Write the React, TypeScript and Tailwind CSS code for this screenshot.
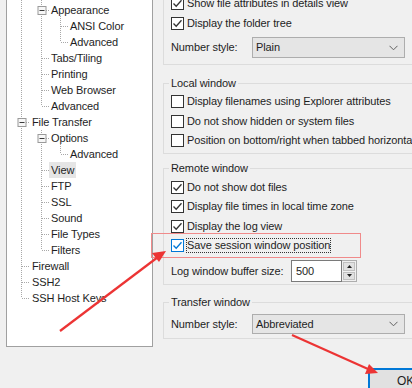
import React from 'react';

interface TreeNode {
  label: string;
  depth: number;
  selected?: boolean;
}

const tree: TreeNode[] = [
  { label: 'Appearance', depth: 1 },
  { label: 'ANSI Color', depth: 2 },
  { label: 'Advanced', depth: 2 },
  { label: 'Tabs/Tiling', depth: 1 },
  { label: 'Printing', depth: 1 },
  { label: 'Web Browser', depth: 1 },
  { label: 'Advanced', depth: 1 },
  { label: 'File Transfer', depth: 0 },
  { label: 'Options', depth: 1 },
  { label: 'Advanced', depth: 2 },
  { label: 'View', depth: 1, selected: true },
  { label: 'FTP', depth: 1 },
  { label: 'SSL', depth: 1 },
  { label: 'Sound', depth: 1 },
  { label: 'File Types', depth: 1 },
  { label: 'Filters', depth: 1 },
  { label: 'Firewall', depth: 0 },
  { label: 'SSH2', depth: 0 },
  { label: 'SSH Host Keys', depth: 0 },
];

const indent = ['pl-[25px]', 'pl-[44px]', 'pl-[63px]'];

// row centre in tree-local coords
const cy = (i: number) => 10 + 16 * i;

function Expander({ x, y }: { x: number; y: number }) {
  return (
    <g>
      <rect x={x - 4 + 0.5} y={y - 4 + 0.5} width={8} height={8} fill="#f7f7f7" stroke="#9a9a9a" />
      <line x1={x - 2} y1={y + 0.5} x2={x + 3} y2={y + 0.5} stroke="#3a3a3a" />
    </g>
  );
}

function TreeLines() {
  const dot = { stroke: '#a8a8a8', strokeDasharray: '1 1', strokeWidth: 1 };
  const h = (x1: number, x2: number, y: number, k: string) => (
    <line key={k} x1={x1} x2={x2} y1={y + 0.5} y2={y + 0.5} {...dot} />
  );
  const v = (x: number, y1: number, y2: number, k: string) => (
    <line key={k} x1={x + 0.5} x2={x + 0.5} y1={y1} y2={y2} {...dot} />
  );
  return (
    <svg className="absolute left-0 top-0" width={146} height={346}>
      {v(14, 0, cy(18), 'v0')}
      {v(34, 0, cy(6), 'v1a')}
      {v(34, cy(7) + 8, cy(15), 'v1b')}
      {v(53, cy(0) + 6, cy(2), 'v2a')}
      {v(53, cy(8) + 6, cy(9), 'v2b')}
      {[16, 17, 18].map((i) => h(15, 23, cy(i), 'r' + i))}
      {h(19, 23, cy(7), 'ft')}
      {[3, 4, 5, 6, 10, 11, 12, 13, 14, 15].map((i) => h(35, 42, cy(i), 'a' + i))}
      {h(39, 42, cy(0), 'ap')}
      {h(39, 42, cy(8), 'op')}
      {[1, 2, 9].map((i) => h(54, 61, cy(i), 'b' + i))}
      <Expander x={14.5} y={cy(7)} />
      <Expander x={34.5} y={cy(0)} />
      <Expander x={34.5} y={cy(8)} />
    </svg>
  );
}

function Checkbox({ checked, focus }: { checked?: boolean; focus?: boolean }) {
  return (
    <span
      className={`w-[13px] h-[13px] shrink-0 border bg-white flex items-center justify-center ${
        focus ? 'border-[#0078d7]' : 'border-[#333]'
      }`}
    >
      {checked && (
        <svg width="11" height="11" viewBox="0 0 11 11">
          <path
            d="M1.5 5.5 L4.2 8.3 L9.5 2.2"
            fill="none"
            stroke={focus ? '#0078d7' : '#333'}
            strokeWidth="1.3"
          />
        </svg>
      )}
    </span>
  );
}

function CheckRow({
  label,
  checked,
  focus,
  h = 'h-[20px]',
}: {
  label: string;
  checked?: boolean;
  focus?: boolean;
  h?: string;
}) {
  return (
    <div className={`${h} flex items-center gap-[3px] whitespace-nowrap`}>
      <Checkbox checked={checked} focus={focus} />
      <span className={focus ? 'outline outline-1 outline-dotted outline-[#333] leading-[13px]' : ''}>
        {label}
      </span>
    </div>
  );
}

function Dropdown({ value }: { value: string }) {
  return (
    <div className="w-[153px] h-full bg-[#e5e5e5] border border-[#adadad] flex items-center justify-between pl-[3px] pr-[6px]">
      <span>{value}</span>
      <svg width="9" height="6" viewBox="0 0 9 6">
        <path d="M0.5 0.8 L4.5 4.8 L8.5 0.8" fill="none" stroke="#606060" strokeWidth="1" />
      </svg>
    </div>
  );
}

function Arrows() {
  return (
    <svg className="absolute left-0 top-0 pointer-events-none" width={412} height={388}>
      <rect x={151.5} y={233.5} width={209} height={24} fill="none" stroke="#f08a8a" />
      <line x1={60} y1={331} x2={158} y2={257} stroke="#ec3434" strokeWidth={2.2} />
      <polygon points="166,251 159,262 152,253" fill="#ec3434" />
      <line x1={292} y1={335} x2={368} y2={369} stroke="#ec3434" strokeWidth={2.2} />
      <polygon points="378,373 365,374 369,364" fill="#ec3434" />
    </svg>
  );
}

export default function App() {
  return (
    <div className="relative w-[412px] h-[388px] overflow-hidden bg-[#f0f0f0] text-[11px] text-[#1e1e1e] font-['Liberation_Sans',Arial,sans-serif] tracking-[-0.1px]">
      <div className="flex">
        {/* Tree pane */}
        <div className="relative ml-[6px] w-[147px] h-[347px] shrink-0 bg-white border-x border-b border-[#a0a0a0]">
          <TreeLines />
          <div className="relative pt-[2px]">
            {tree.map((n, i) => (
              <div key={i} className={`h-[16px] leading-[16px] whitespace-nowrap ${indent[n.depth]}`}>
                <span className={n.selected ? 'bg-[#e5e5e5] px-[2px] -ml-[2px] inline-block' : ''}>{n.label}</span>
              </div>
            ))}
          </div>
        </div>

        {/* Options pane */}
        <div className="ml-[10px] w-[252px] shrink-0 flex flex-col">
          <div className="-mt-[7px] border-x border-b border-[#dcdcdc] pl-[7px] pb-[6px]">
            <CheckRow label="Show file attributes in details view" checked />
            <CheckRow label="Display the folder tree" checked />
            <div className="mt-[4px] h-[21px] flex items-center">
              <span className="w-[81px]">Number style:</span>
              <Dropdown value="Plain" />
            </div>
          </div>

          <fieldset className="mt-[12px] border border-[#dcdcdc] pl-[7px] pt-[2px] pb-[3px]">
            <legend className="-ml-[2px] px-[2px] leading-[13px]">Local window</legend>
            <CheckRow label="Display filenames using Explorer attributes" h="h-[19px]" />
            <CheckRow label="Do not show hidden or system files" />
            <CheckRow label="Position on bottom/right when tabbed horizontally" h="h-[19px]" />
          </fieldset>

          <fieldset className="mt-[8px] border border-[#dcdcdc] pl-[7px] pt-[3px] pb-[2px]">
            <legend className="-ml-[2px] px-[2px] leading-[13px]">Remote window</legend>
            <CheckRow label="Do not show dot files" checked h="h-[19px]" />
            <CheckRow label="Display file times in local time zone" checked h="h-[19px]" />
            <CheckRow label="Display the log view" checked />
            <CheckRow label="Save session window position" checked focus h="h-[19px]" />
            <div className="mt-[5px] h-[22px] flex items-center">
              <span className="w-[120px]">Log window buffer size:</span>
              <div className="w-[51px] h-full bg-white border border-[#7a7a7a] flex items-center pl-[4px]">500</div>
              <div className="w-[15px] h-full flex flex-col border border-l-0 border-[#adadad] bg-[#f0f0f0] p-[1px] gap-[1px]">
                <div className="flex-1 bg-[#e1e1e1] border border-[#c0c0c0] flex items-center justify-center">
                  <svg width="5" height="3" viewBox="0 0 5 3"><path d="M0 3 L2.5 0 L5 3 Z" fill="#222" /></svg>
                </div>
                <div className="flex-1 bg-[#e1e1e1] border border-[#c0c0c0] flex items-center justify-center">
                  <svg width="5" height="3" viewBox="0 0 5 3"><path d="M0 0 L2.5 3 L5 0 Z" fill="#222" /></svg>
                </div>
              </div>
            </div>
          </fieldset>

          <fieldset className="mt-[11px] border border-[#dcdcdc] pl-[7px] pt-[5px] pb-[4px]">
            <legend className="-ml-[2px] px-[2px] leading-[13px]">Transfer window</legend>
            <div className="h-[20px] flex items-center">
              <span className="w-[81px]">Number style:</span>
              <Dropdown value="Abbreviated" />
            </div>
          </fieldset>

          <button className="ml-[205px] mt-[29px] w-[75px] h-[26px] shrink-0 border-2 border-[#0078d7] bg-[#e1e1e1] text-center text-[12px]">
            OK
          </button>
        </div>
      </div>
      <Arrows />
    </div>
  );
}
